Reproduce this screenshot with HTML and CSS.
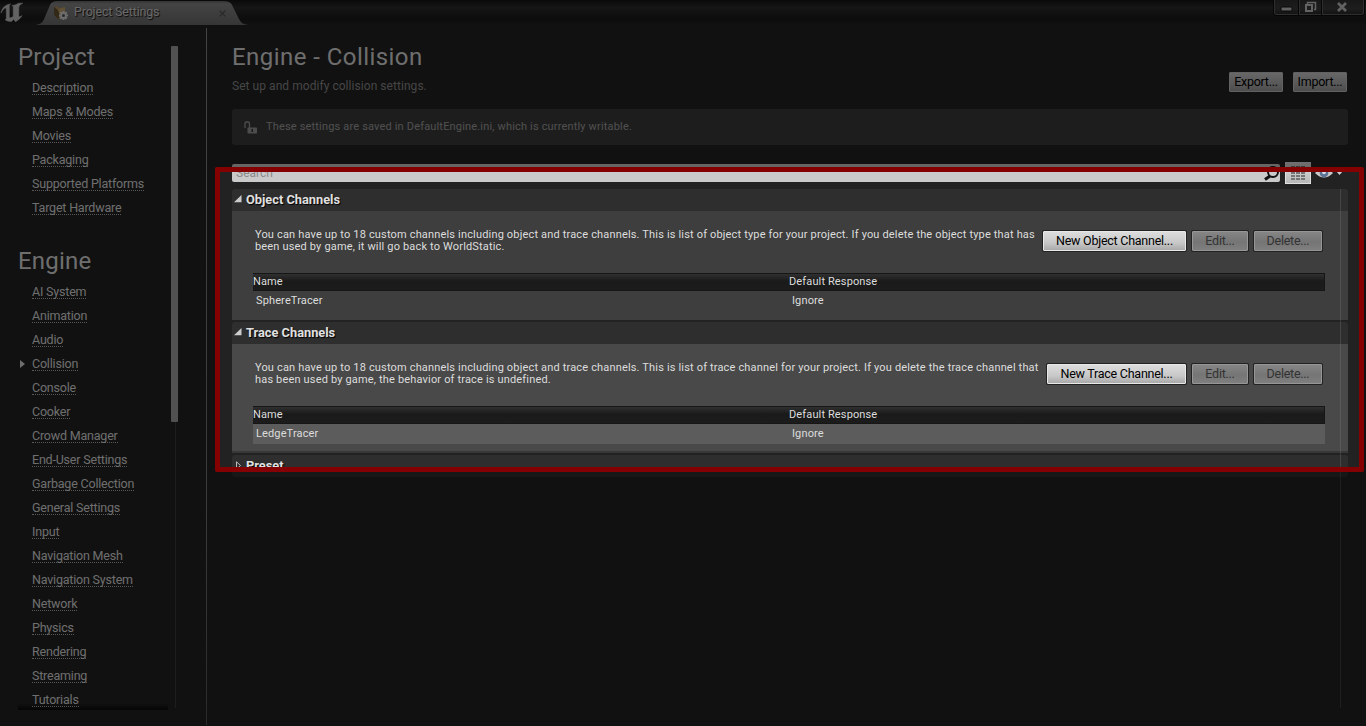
FILE: index.html
```
<!DOCTYPE html>
<html lang="en">
<head>
<meta charset="utf-8">
<title>Project Settings</title>
<link rel="stylesheet" href="styles.css">
</head>
<body>
<div class="window">
  <header class="titlebar">
    <svg class="logo" width="26" height="26" viewBox="0 0 26 26"><path fill="#c4c4c4" stroke="#c4c4c4" stroke-width=".5" d="M1 13C2 8 5.500 4.500 10.500 4C9.500 4.800 9.300 5.500 9.300 7V16.200C9.300 17.700 10.500 18.200 12 17.300L13.200 16.300V7.200C13.200 6.200 12.800 5.700 11.800 5.600C14.500 5.200 17 4.400 18.500 3.200H22.800C19.800 4.700 18.800 6 18.800 8V15.700C18.800 17 19.700 17.300 22 15.600C20.500 18.500 18 20.400 15.500 21.700L13.700 19.300L11.300 21.500C8.500 21.600 6.300 20.800 5 19.600C6 19.500 6.300 18.900 6.300 17.800V9.400C6.300 7.700 5.400 7.400 4 8.700C2.800 9.900 1.800 11.300 1 13Z"/></svg>
    <div class="tab">
      <svg class="tab-shape" width="212" height="25" viewBox="0 0 212 25"><defs><linearGradient id="tg" x1="0" y1="0" x2="0" y2="1"><stop offset="0" stop-color="#686868"/><stop offset=".12" stop-color="#888"/><stop offset="1" stop-color="#6c6c6c"/></linearGradient></defs><path fill="url(#tg)" d="M0 25C5 24 7 22 8.500 18L14 5C15.500 2 17.500 1 21 1H188C192 1 194.500 2 196 5L203 19C205 23 207 24 212 25Z"/></svg>
      <svg class="tab-icon" width="16" height="16" viewBox="0 0 16 16"><path fill="#a68a58" d="M1 2L5 1L6 3L12 2V12L5 14L1 10Z"/><path fill="#66522e" d="M1 2L6 6V13.500L5 14L1 10Z"/><path fill="#c1a36c" d="M5 4L12 2V8H6Z"/><g stroke="#ddd" stroke-width="2"><path d="M10.500 6V15M6 10.500H15M7.300 7.300L13.700 13.700M13.700 7.300L7.300 13.700"/></g><circle cx="10.500" cy="10.500" r="3" fill="#ddd"/><circle cx="10.500" cy="10.500" r="1.500" fill="#555"/></svg>
      <span class="tab-label">Project Settings</span>
      <svg class="tab-close" width="7" height="7" viewBox="0 0 7 7"><path d="M.7 .7L6.300 6.300M6.300 .7L.7 6.300" stroke="#505050" stroke-width="1.200"/></svg>
    </div>
    <div class="winbtns">
      <span class="wb wb-min"><svg width="24" height="14"><rect x="6" y="7" width="11" height="4" rx="1" fill="#c4c4c4" stroke="#111"/></svg></span>
      <span class="wb wb-max"><svg width="21" height="14"><g fill="none" stroke="#c4c4c4"><path d="M7.500 4V2.500H15.500V9.500H14" stroke-width="1.500"/><rect x="6" y="5" width="6" height="6" stroke-width="2"/></g></svg></span>
      <span class="wb wb-close"><svg width="40" height="14"><path d="M15 3L23 11M23 3L15 11" stroke="#c4c4c4" stroke-width="2.600"/></svg></span>
    </div>
  </header>

  <div class="body">
    <nav class="sidebar">
      <div class="nav-list">
        <h2>Project</h2>
        <ul>
          <li><a>Description</a></li><li><a>Maps &amp; Modes</a></li><li><a>Movies</a></li><li><a>Packaging</a></li><li><a>Supported Platforms</a></li><li><a>Target Hardware</a></li>
        </ul>
        <h2 class="second">Engine</h2>
        <ul>
          <li><a>AI System</a></li><li><a>Animation</a></li><li><a>Audio</a></li><li class="current"><a>Collision</a></li><li><a>Console</a></li><li><a>Cooker</a></li><li><a>Crowd Manager</a></li><li><a>End-User Settings</a></li><li><a>Garbage Collection</a></li><li><a>General Settings</a></li><li><a>Input</a></li><li><a>Navigation Mesh</a></li><li><a>Navigation System</a></li><li><a>Network</a></li><li><a>Physics</a></li><li><a>Rendering</a></li><li><a>Streaming</a></li><li><a>Tutorials</a></li>
        </ul>
      </div>
      <div class="scroll"><div class="thumb"></div><div class="track"></div></div>
    </nav>

    <main class="main">
      <div class="heading">
        <div>
          <h1>Engine - Collision</h1>
          <p class="sub">Set up and modify collision settings.</p>
        </div>
        <div class="top-actions"><button class="btn io">Export...</button><button class="btn io">Import...</button></div>
      </div>

      <div class="notice">
        <svg width="14" height="14" viewBox="0 0 14 14"><path d="M1 7V3Q1 1 2.500 1H4Q5.500 1 5.500 3V7" fill="none" stroke="#999" stroke-width="1.300"/><rect x="3.500" y="6.500" width="9.500" height="6" rx=".8" fill="#999"/><rect x="7.500" y="8" width="1.500" height="3" fill="#333"/></svg>
        <span>These settings are saved in DefaultEngine.ini, which is currently writable.</span>
      </div>

      <div class="toolbar">
        <div class="search"><span>Search</span>
          <svg width="18" height="18" viewBox="0 0 18 18"><circle cx="11" cy="8" r="5" fill="none" stroke="#111" stroke-width="2"/><path d="M8 12L3 15.500" stroke="#111" stroke-width="3"/></svg>
        </div>
        <div class="grid-btn"><svg width="14" height="14" viewBox="0 0 14 14"><g fill="#757575"><path d="M0 0H4V2H0ZM5 0H9V2H5ZM10 0H14V2H10ZM0 3H4V5H0ZM5 3H9V5H5ZM10 3H14V5H10ZM0 6H4V8H0ZM5 6H9V8H5ZM10 6H14V8H10ZM0 9H4V11H0ZM5 9H9V11H5ZM10 9H14V11H10ZM0 12H4V14H0ZM5 12H9V14H5ZM10 12H14V14H10Z"/></g></svg></div>
        <svg class="eye" width="28" height="16" viewBox="0 0 28 16"><path d="M0 8Q9 -1 18 8Q9 17 0 8Z" fill="#c8c8c8"/><circle cx="9" cy="8" r="4.300" fill="#5b7397"/><circle cx="9" cy="7.500" r="1.800" fill="#dde"/><path d="M21 6H28L24.500 10Z" fill="#ccc"/></svg>
      </div>

      <div class="details">
        <section class="cat">
          <h3><svg class="open" width="8" height="8" viewBox="0 0 8 8"><path d="M7.500 0V7.300H0Z" fill="#ccc"/></svg>Object Channels</h3>
          <div class="panel object">
            <div class="row">
              <p>You can have up to 18 custom channels including object and trace channels. This is list of object type for your project. If you delete the object type that has<br>been used by game, it will go back to WorldStatic.</p>
              <div class="actions"><button class="btn new-object">New Object Channel...</button><button class="btn off edit">Edit...</button><button class="btn off delete">Delete...</button></div>
            </div>
            <div class="thead"><span>Name</span><span>Default Response</span></div>
            <div class="trow"><span>SphereTracer</span><span>Ignore</span></div>
          </div>
        </section>
        <section class="cat">
          <h3><svg class="open" width="8" height="8" viewBox="0 0 8 8"><path d="M7.500 0V7.300H0Z" fill="#ccc"/></svg>Trace Channels</h3>
          <div class="panel trace">
            <div class="row">
              <p>You can have up to 18 custom channels including object and trace channels. This is list of trace channel for your project. If you delete the trace channel that<br>has been used by game, the behavior of trace is undefined.</p>
              <div class="actions"><button class="btn new-trace">New Trace Channel...</button><button class="btn off edit">Edit...</button><button class="btn off delete">Delete...</button></div>
            </div>
            <div class="thead"><span>Name</span><span>Default Response</span></div>
            <div class="trow selected"><span>LedgeTracer</span><span>Ignore</span></div>
          </div>
        </section>
        <section class="cat">
          <h3 class="closed-cat"><svg width="7" height="9" viewBox="0 0 7 9"><path d="M1.500 .8V8.200L5.500 4.500Z" fill="none" stroke="#bbb"/></svg>Preset</h3>
        </section>
        <div class="details-track"></div>
      </div>
    </main>
  </div>
  <div class="highlight"></div>
</div>
</body>
</html>
```
FILE: styles.css
```
* { box-sizing: border-box; }
body { margin: 0; background: #222; font-family: Roboto, "Liberation Sans", sans-serif; color: #ddd; }
h1, h2, h3, p, ul { margin: 0; padding: 0; font-weight: 400; }
ul { list-style: none; }
svg { display: block; }

.window { position: relative; width: 1366px; height: 726px; overflow: hidden; background: #222; display: flex; flex-direction: column; }

.titlebar { height: 25px; display: flex; align-items: flex-start; background: linear-gradient(#131313, #2c2c2c 30%, #1a1a1a 75%, #222); }
.logo { margin-right: 10px; }
.tab { position: relative; width: 212px; height: 25px; display: flex; align-items: flex-start; padding-left: 17px; }
.tab-shape { position: absolute; left: 0; top: 0; }
.tab-icon, .tab-label, .tab-close { position: relative; }
.tab-icon { margin-top: 5px; }
.tab-label { margin: 4px 0 0 5px; width: 145px; font-size: 12.5px; line-height: 15px; letter-spacing: -.17px; color: #d0d0d0; text-shadow: 1px 1px 1px #111; }
.tab-close { margin-top: 10px; }
.winbtns { margin-left: auto; margin-right: 2px; display: flex; }
.wb { height: 15px; border: 1px solid #5c5c5c; border-top: 0; background: linear-gradient(#303030, #3c3c3c 60%, #282828); box-shadow: 0 0 0 1px #0c0c0c; }
.wb-min { width: 25px; border-radius: 0 0 0 3px; }
.wb-max { width: 23px; }
.wb-close { width: 42px; border-radius: 0 0 3px 0; }

.body { flex: 1; display: flex; }
.sidebar { width: 207px; height: 697px; margin-top: 3px; display: flex; padding-left: 18px; border-right: 1px solid; border-image: linear-gradient(#888, #777 70%, #555) 1; }
.nav-list { width: 150px; height: 682px; padding-top: 14px; background: linear-gradient(transparent 675px, #0b0b0b) no-repeat; }
h2 { font-size: 24px; line-height: 30px; margin-bottom: 4px; letter-spacing: .2px; }
h2.second { margin-top: 26px; }
li { height: 24px; padding: 4px 0 0 14px; position: relative; }
li a { display: inline-block; vertical-align: top; height: 15px; font-size: 12.5px; line-height: 16px; letter-spacing: -.2px; white-space: nowrap; border-bottom: 1px dotted #b0b0b0; }
.current::before { content: ""; position: absolute; left: 2px; top: 8px; border: solid transparent; border-width: 4px 0 4px 5px; border-left-color: #ddd; }
.scroll { padding-top: 18px; margin-left: 3px; }
.thumb { width: 7px; height: 376px; background: #a2a2a2; border-radius: 1px; }
.track { width: 1px; height: 286px; margin-left: 4px; background: #3a3a3a; }

.main { flex: 1; padding: 17px 18px 0 25px; }
.heading { height: 67px; display: flex; justify-content: space-between; }
h1 { font-size: 24px; line-height: 30px; letter-spacing: .44px; }
.sub { font-size: 12px; line-height: 16px; letter-spacing: .05px; margin-top: 6px; color: #8c8c8c; }
.top-actions { display: flex; gap: 10px; padding: 30px 1px 0 0; }
.btn { height: 20px; padding: 0 0 1px; border: 1px solid #e8e8e8; border-radius: 1px; font: 12.5px/16px Roboto, sans-serif; letter-spacing: -.25px; color: #000; background: linear-gradient(#dcdcdc, #c8c8c8 60%, #aaa); box-shadow: 0 0 0 1px #222; }
.io { width: 54px; border-color: #c4c4c4; background: linear-gradient(#d0d0d0, #b6b6b6 50%, #9c9c9c); }
.notice { height: 36px; border-radius: 3px; background: #3b3b3b; display: flex; align-items: center; padding-left: 12px; gap: 8px; font-size: 11px; letter-spacing: .17px; color: #a0a0a0; }
.notice svg { margin-top: 1px; }
.notice span { margin-top: -1px; }

.toolbar { margin-top: 17px; height: 22px; display: flex; align-items: center; }
.search { width: 1048px; height: 18px; background: #cacaca; border-radius: 2px; display: flex; justify-content: space-between; align-items: center; padding-left: 4px; font-size: 12px; color: #8a8a8a; }
.grid-btn { width: 26px; height: 22px; margin-left: 5px; border: 1px solid #e0e0e0; background: linear-gradient(#ddd, #b8b8b8); display: flex; align-items: center; justify-content: center; }
.eye { margin-left: 4px; }

.details { position: relative; margin-top: 5px; display: flex; flex-direction: column; gap: 2px; }
h3 { height: 22px; background: #2e2e2e; border-radius: 3px 3px 0 0; display: flex; align-items: center; font-size: 12.8px; line-height: 22px; font-weight: 700; letter-spacing: 0; color: #e0e0e0; text-shadow: 1px 1px 1px #000; padding-left: 3px; }
.open { margin: -2px 4px 0 -1px; }
h3 .open { margin-right: 4px; }
.closed-cat { border-radius: 3px; }
.closed-cat svg { margin: -2px 4px 0 0; }
.panel { padding: 18px 23px 0 21px; height: 109px; background: #3e3e3e; }
.trace { background: #494949; border-bottom: 2px solid #383838; }
.row { height: 44px; display: flex; justify-content: space-between; padding: 0 3px 0 2px; }
.row p { font-size: 11px; line-height: 12px; letter-spacing: .168px; white-space: nowrap; }
.actions { display: flex; gap: 6px; padding-top: 2px; }
.new-object { width: 143px; }
.new-trace { width: 139px; }
.edit { width: 56px; }
.delete { width: 68px; }
.btn.off { color: #333; border-color: #969696; background: linear-gradient(#858585, #757575 55%, #7f7f7f); }
.thead, .trow { display: grid; grid-template-columns: 536px 1fr; font-size: 11px; letter-spacing: .13px; }
.thead { height: 18px; line-height: 16px; border: 1px solid #161616; border-left: 0; background: linear-gradient(#303030, #1a1a1a 45%, #1c1c1c); }
.trow { height: 20px; line-height: 19px; padding-left: 3px; }
.selected { background: #5c5c5c; }
.details-track { position: absolute; left: 1108px; top: 0; width: 1px; height: 519px; background: rgba(140,140,140,.25); }

.highlight { position: absolute; left: 215px; top: 167px; width: 1149px; height: 305px; border: 5px solid #850000; border-radius: 2px; box-shadow: 0 0 0 1400px rgba(0,0,0,.5); }
```
